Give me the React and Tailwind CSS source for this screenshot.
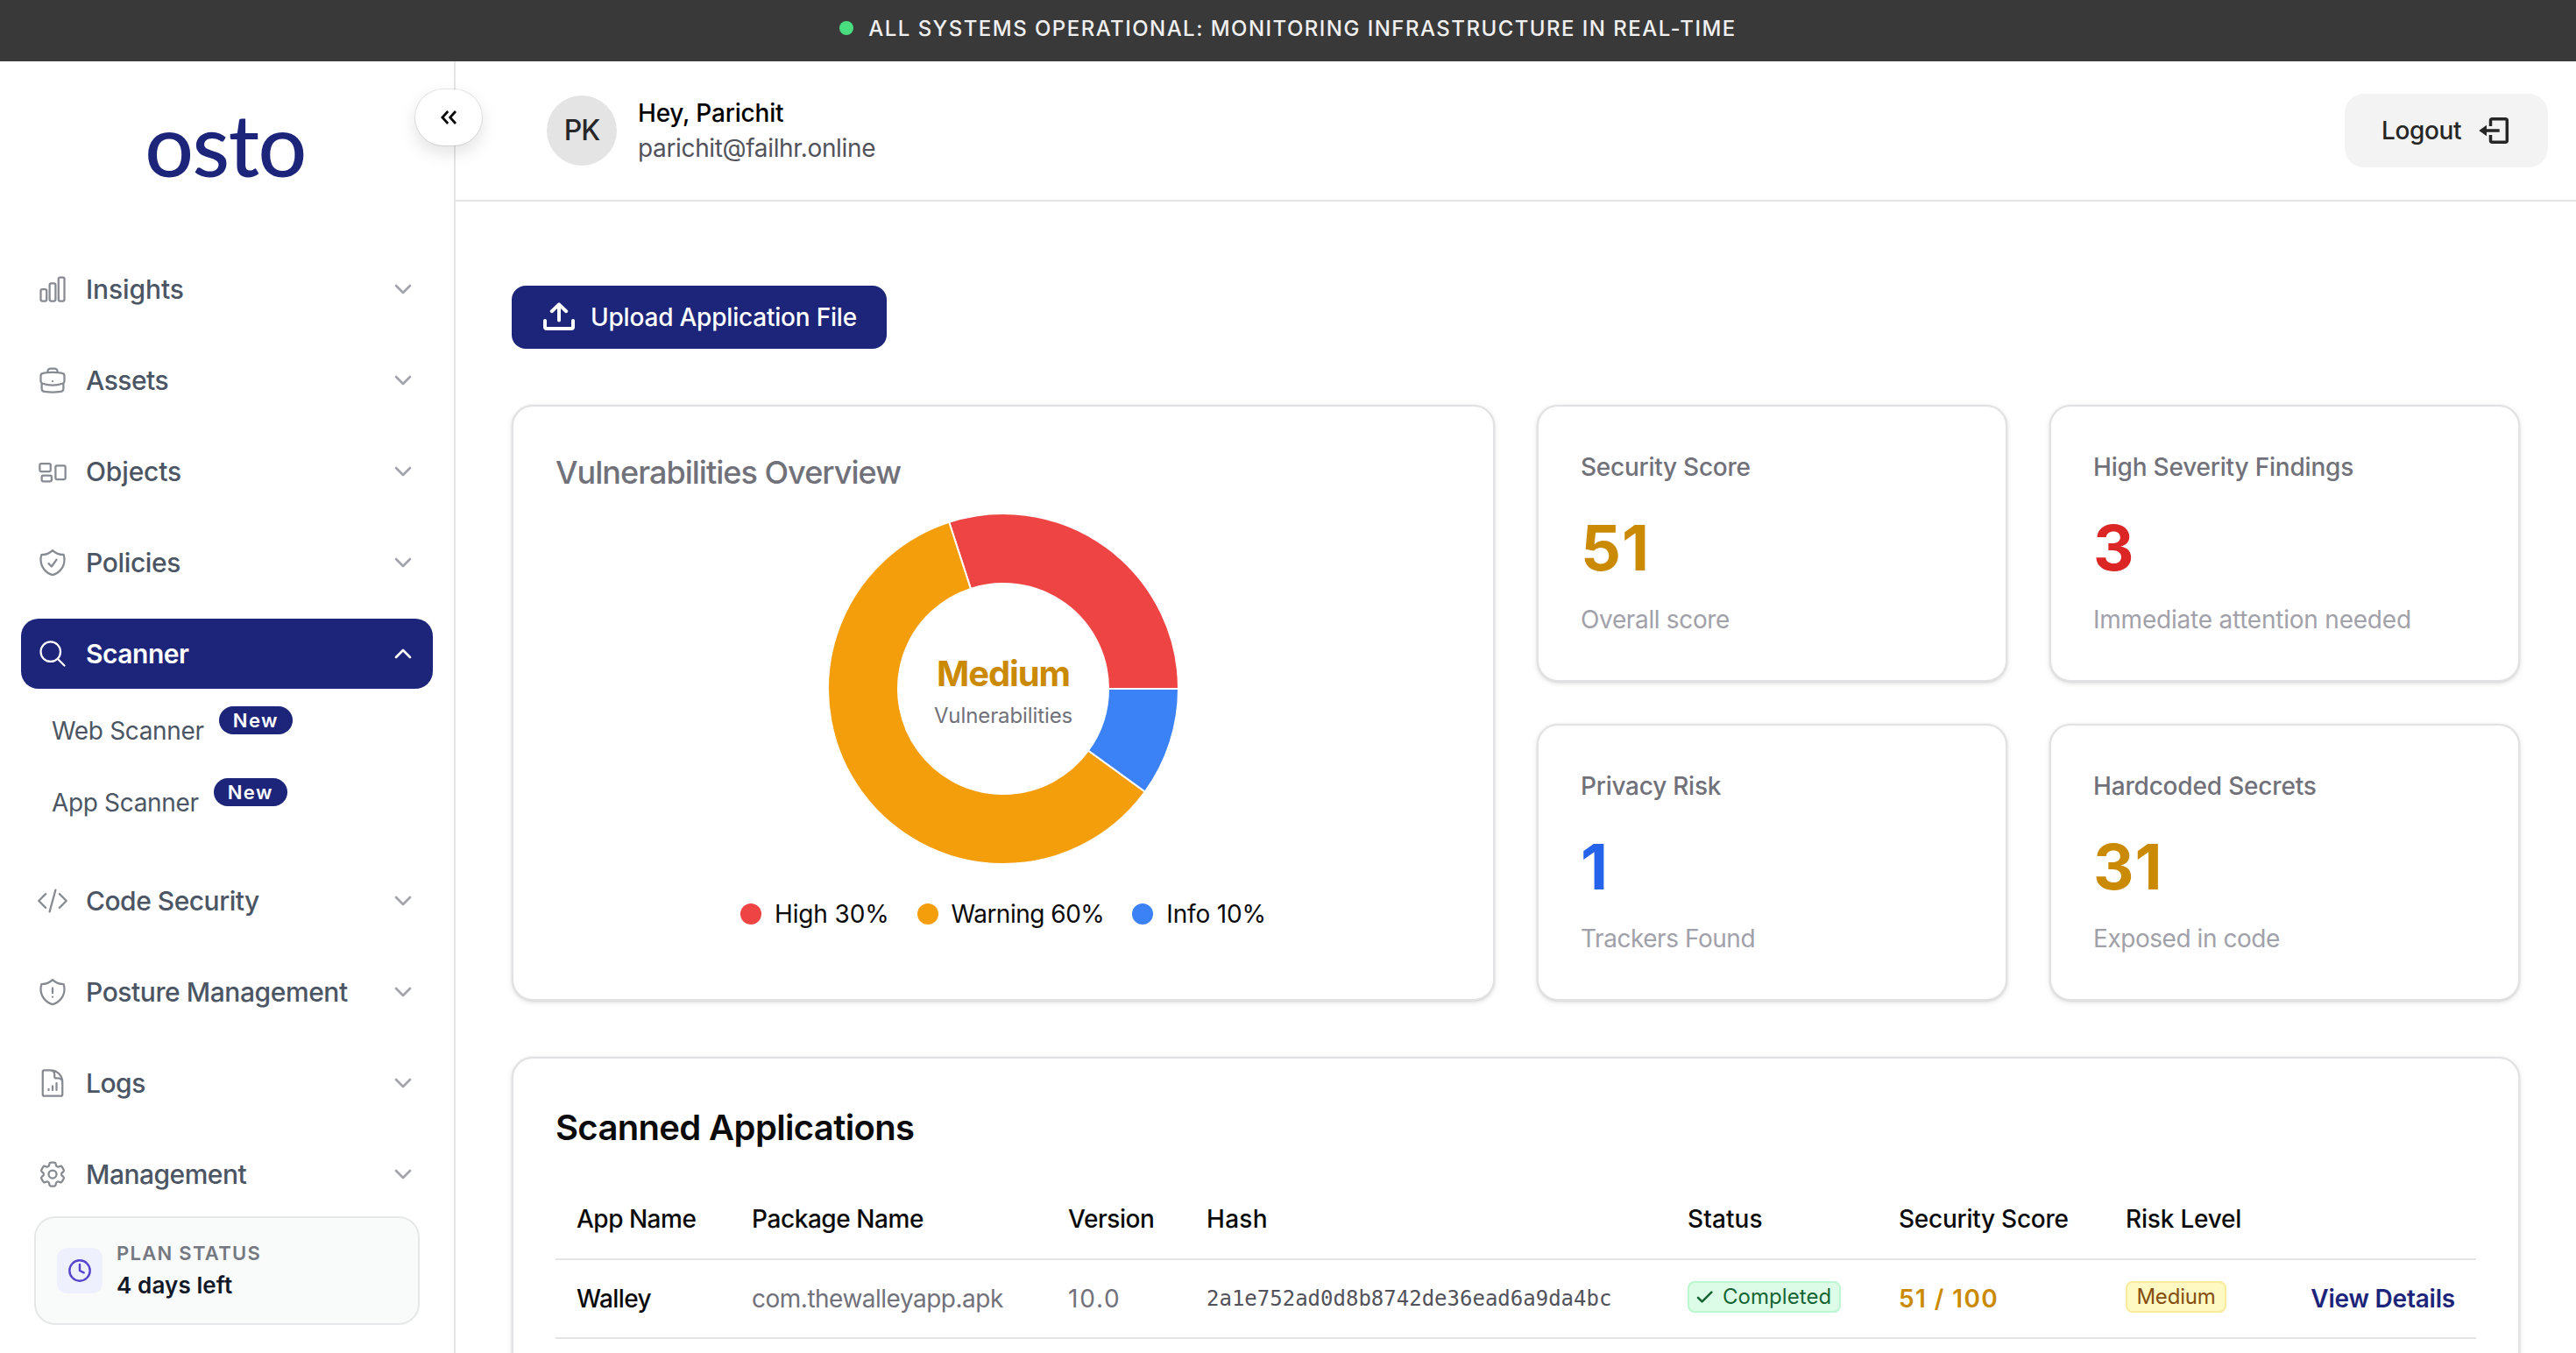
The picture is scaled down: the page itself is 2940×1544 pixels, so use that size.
import React from "react";
import {
  HiOutlineChartBar,
  HiOutlineBriefcase,
  HiOutlineRectangleGroup,
  HiOutlineShieldCheck,
  HiOutlineMagnifyingGlass,
  HiOutlineCodeBracket,
  HiOutlineShieldExclamation,
  HiOutlineDocumentChartBar,
  HiOutlineCog6Tooth,
} from "react-icons/hi2";
import { ChevronDown, ChevronUp, Clock } from "lucide-react";

const NAV_TOP = [
  { label: "Insights", Icon: HiOutlineChartBar, spacing: "tracking-[-0.1px]" },
  { label: "Assets", Icon: HiOutlineBriefcase, spacing: "tracking-[-0.5px]" },
  { label: "Objects", Icon: HiOutlineRectangleGroup, spacing: "tracking-[-0.15px]" },
  { label: "Policies", Icon: HiOutlineShieldCheck, spacing: "tracking-[-0.35px]" },
];

const NAV_BOTTOM = [
  { label: "Code Security", Icon: HiOutlineCodeBracket, spacing: "tracking-[-0.5px]" },
  { label: "Posture Management", Icon: HiOutlineShieldExclamation, spacing: "tracking-[-0.43px]" },
  { label: "Logs", Icon: HiOutlineDocumentChartBar, spacing: "tracking-[-0.5px]" },
  { label: "Management", Icon: HiOutlineCog6Tooth, spacing: "tracking-[-0.5px]" },
];

const STATS = [
  { title: "Security Score", value: "51", note: "Overall score", color: "text-[#ca8a04]", spacing: "tracking-[-0.26px]", noteSpacing: "tracking-[-0.35px]" },
  { title: "High Severity Findings", value: "3", note: "Immediate attention needed", color: "text-[#dc2626]", spacing: "tracking-[-0.2px]", noteSpacing: "tracking-[-0.22px]" },
  { title: "Privacy Risk", value: "1", note: "Trackers Found", color: "text-[#2563eb]", spacing: "tracking-[-0.25px]", noteSpacing: "tracking-[-0.45px]" },
  { title: "Hardcoded Secrets", value: "31", note: "Exposed in code", color: "text-[#ca8a04]", spacing: "tracking-[-0.18px]", noteSpacing: "tracking-[-0.45px]" },
];

const CARD = "rounded-3xl border-2 border-[#e2e2e4] bg-white shadow-[0_0_2px_rgba(0,0,0,0.08),0_2px_6px_rgba(0,0,0,0.1),0_2px_4px_-2px_rgba(0,0,0,0.1)]";

function NavItem({ label, Icon, spacing }) {
  return (
    <a className="flex h-20 items-center rounded-[20px] pr-[18px] pl-[18px]">
      <Icon className="size-9 shrink-0 text-[#868a91]" />
      <span className={`ml-5 flex-1 text-[30px] font-medium whitespace-nowrap text-[#4b5563] ${spacing}`}>{label}</span>
      <ChevronDown className="size-8 shrink-0 text-[#a1a5ab]" strokeWidth={2} />
    </a>
  );
}

function SubItem({ label }) {
  return (
    <a className="flex h-[82px] items-start gap-[17px] pt-5 pl-[35px]">
      <span className="mt-2 text-[28px] leading-10 tracking-[-0.34px] text-[#4b5563]">{label}</span>
      <span className="flex h-8 items-center rounded-full bg-[#1c2579] px-4 text-[22px] font-semibold tracking-[1.5px] text-white">New</span>
    </a>
  );
}

function Sidebar() {
  return (
    <aside className="relative flex w-[520px] shrink-0 flex-col border-r-2 border-[#e5e5e6] bg-white">
      <div className="flex h-[220px] justify-center pt-[34px] pr-1">
        <span className="h-[120px] text-[98px] leading-[120px] font-medium tracking-[-1.4px] text-[#1c2579] [font-family:Lato,sans-serif]">osto</span>
      </div>
      <nav className="flex flex-col px-6">
        <div className="flex flex-col gap-6">
          {NAV_TOP.map((item) => (
            <NavItem key={item.label} {...item} />
          ))}
          <a className="flex h-20 items-center rounded-[20px] bg-[#1c2579] pr-[18px] pl-[18px] text-white">
            <HiOutlineMagnifyingGlass className="size-9 shrink-0" />
            <span className="ml-5 flex-1 text-[30px] font-semibold tracking-[-0.49px]">Scanner</span>
            <ChevronUp className="size-8 shrink-0" strokeWidth={2} />
          </a>
        </div>
        <div className="mb-[38px] flex flex-col">
          <SubItem label="Web Scanner" />
          <SubItem label="App Scanner" />
        </div>
        <div className="flex flex-col gap-6">
          {NAV_BOTTOM.map((item) => (
            <NavItem key={item.label} {...item} />
          ))}
        </div>
      </nav>
      <div className="mx-[39px] mt-2 flex h-[124px] items-center rounded-3xl border-2 border-[#e6e7e8] bg-[#f9fafa] px-6">
        <div className="flex size-[52px] items-center justify-center rounded-xl bg-[#eef0fe]">
          <Clock className="size-7 text-[#5445cc]" strokeWidth={2.1} />
        </div>
        <div className="ml-4 flex flex-col">
          <span className="text-[22px] leading-8 font-semibold tracking-[1.29px] text-[#737881]">PLAN STATUS</span>
          <span className="mt-px text-[26px] leading-10 font-semibold tracking-[0.1px] text-[#111827]">4 days left</span>
        </div>
      </div>
      <button className="absolute top-8 -right-8 flex h-16 w-[76px] items-center justify-center rounded-full bg-white shadow-[0_0_0_1px_rgba(0,0,0,0.09),0_8px_20px_rgba(0,0,0,0.12)]">
        <svg className="h-4 w-[18px] overflow-visible" viewBox="0 0 18 16" fill="none" stroke="#0a0a0a" strokeWidth="2.8">
          <path d="M8.2 1 1.9 8l6.3 7M17 1l-6.3 7L17 15" />
        </svg>
      </button>
    </aside>
  );
}

function Header() {
  return (
    <header className="flex h-40 shrink-0 items-center border-b-2 border-[#e4e4e5] pr-8 pl-[104px]">
      <div className="flex size-20 items-center justify-center rounded-full bg-[#e4e4e5] text-[32px] font-medium tracking-[-1px] text-[#27272a]">PK</div>
      <div className="ml-6 flex flex-1 flex-col text-[28px] leading-10">
        <span className="font-medium tracking-[-0.2px] text-black">Hey, Parichit</span>
        <span className="tracking-[-0.35px] text-[#52525b]">parichit@failhr.online</span>
      </div>
      <button className="flex h-[84px] w-[232px] items-center rounded-[22px] bg-[#f3f3f3] pl-[42px] text-[#262626]">
        <span className="w-[110px] text-left text-[28px] font-medium tracking-[-0.37px]">Logout</span>
        <svg className="size-9" viewBox="0 0 36 36" fill="none">
          <path d="M14.5 13V6.7a2 2 0 0 1 2-2h14.8a2 2 0 0 1 2 2v22.6a2 2 0 0 1-2 2H16.5a2 2 0 0 1-2-2V23M9 18h15.7" stroke="currentColor" strokeWidth="3.5" />
          <path d="M1.3 18 10 11.7v12.6z" fill="currentColor" />
        </svg>
      </button>
    </header>
  );
}

const SLICES = [
  { from: 0, to: 108, color: "#ef4444" },
  { from: 108, to: 324, color: "#f59e0b" },
  { from: 324, to: 360, color: "#3b82f6" },
];

function point(radius, degrees) {
  const a = (degrees * Math.PI) / 180;
  return `${(200 + radius * Math.cos(a)).toFixed(2)} ${(200 - radius * Math.sin(a)).toFixed(2)}`;
}

function slicePath({ from, to }) {
  const large = to - from > 180 ? 1 : 0;
  return `M${point(200, from)}A200 200 0 ${large} 0 ${point(200, to)}L${point(120, to)}A120 120 0 ${large} 1 ${point(120, from)}Z`;
}

const LEGEND = [
  { label: "High 30%", dot: "bg-[#ef4444]", spacing: "tracking-[-0.15px]" },
  { label: "Warning 60%", dot: "bg-[#f59e0b]", spacing: "tracking-[-0.5px]" },
  { label: "Info 10%", dot: "bg-[#3b82f6]", spacing: "tracking-[-0.15px]" },
];

function Overview() {
  return (
    <section className={`col-span-2 row-span-2 flex flex-col px-12 pt-[47px] ${CARD}`}>
      <h2 className="text-[36px] leading-[56px] font-medium tracking-[-0.98px] text-[#71717a]">Vulnerabilities Overview</h2>
      <div className="relative mx-auto mt-[19px] size-[400px]">
        <svg className="size-full" viewBox="0 0 400 400">
          {SLICES.map((s) => (
            <path key={s.color} d={slicePath(s)} fill={s.color} stroke="#fff" strokeWidth="2" />
          ))}
        </svg>
        <div className="absolute inset-0 flex flex-col items-center justify-center pt-0.5">
          <span className="text-[40px] leading-[56px] font-bold tracking-[-1.1px] text-[#ca8a04]">Medium</span>
          <span className="mt-1 text-[24px] leading-8 tracking-[-0.1px] text-[#71717a]">Vulnerabilities</span>
        </div>
      </div>
      <div className="mt-[37px] flex justify-center gap-8">
        {LEGEND.map((l) => (
          <div key={l.label} className="flex items-center gap-[15px]">
            <span className={`size-6 rounded-full ${l.dot}`} />
            <span className={`text-[28px] leading-10 text-[#0a0a0a] ${l.spacing}`}>{l.label}</span>
          </div>
        ))}
      </div>
    </section>
  );
}

function StatCard({ title, value, note, color, spacing, noteSpacing }) {
  return (
    <section className={`flex flex-col px-12 pt-[49px] ${CARD}`}>
      <span className={`text-[28px] leading-10 font-medium text-[#71717a] ${spacing}`}>{title}</span>
      <span className={`mt-8 text-[72px] leading-[80px] font-bold tracking-[1px] ${color}`}>{value}</span>
      <span className={`mt-[22px] text-[28px] leading-10 text-[#a1a1aa] ${noteSpacing}`}>{note}</span>
    </section>
  );
}

function ScannedApplications() {
  return (
    <section className={`mt-16 h-[500px] shrink-0 px-12 pt-[51px] ${CARD}`}>
      <h2 className="mb-[31px] text-[40px] leading-[56px] font-semibold tracking-[-0.65px] text-[#0a0a0a]">Scanned Applications</h2>
      <table className="w-full table-fixed border-collapse text-left text-[28px] whitespace-nowrap">
        <colgroup>
          <col className="w-[200px]" />
          <col className="w-[361px]" />
          <col className="w-[158px]" />
          <col className="w-[549px]" />
          <col className="w-[241px]" />
          <col className="w-[259px]" />
          <col className="w-[210px]" />
          <col className="w-[214px]" />
        </colgroup>
        <thead>
          <tr className="h-[91px] border-b-2 border-[#e4e4e5] text-[#0a0a0a] [&>th]:px-6 [&>th]:font-medium">
            <th className="tracking-[-0.5px]">App Name</th>
            <th className="tracking-[-0.42px]">Package Name</th>
            <th className="tracking-[-0.44px]">Version</th>
            <th className="tracking-[0.3px]">Hash</th>
            <th className="tracking-[0.09px]">Status</th>
            <th className="tracking-[-0.26px]">Security Score</th>
            <th className="tracking-[-0.2px]">Risk Level</th>
            <th />
          </tr>
        </thead>
        <tbody>
          <tr className="h-[90px] border-b-2 border-[#e4e4e5] [&>td]:px-6">
            <td className="font-medium tracking-[-0.6px] text-[#0a0a0a]">Walley</td>
            <td className="tracking-[-0.5px] text-[#71717a]">com.thewalleyapp.apk</td>
            <td className="tracking-[1.8px] text-[#71717a]">10.0</td>
            <td className="text-[24px] text-[#52525b] [font-family:'DejaVu_Sans_Mono',monospace]">2a1e752ad0d8b8742de36ead6a9da4bc</td>
            <td>
              <span className="mb-1 flex h-9 w-[175px] items-center rounded-lg border-2 border-[#bbf7d0] bg-[#dcfce7] pl-2 text-[24px] text-[#166534]">
                <svg className="h-4 w-5" viewBox="0 0 20 16" fill="none" stroke="currentColor" strokeWidth="2.6" strokeLinecap="round" strokeLinejoin="round">
                  <path d="M2 8.8 6.6 13.4 17.4 2.6" />
                </svg>
                <span className="ml-2.5 tracking-[0.05px]">Completed</span>
              </span>
            </td>
            <td className="font-semibold tracking-[1.4px] text-[#ca8a04]">51 / 100</td>
            <td>
              <span className="mb-1 flex h-9 w-[115px] items-center justify-center rounded-lg border-2 border-[#f8eb9c] bg-[#fef9c3] text-[24px] tracking-[-0.2px] text-[#854d0e]">Medium</span>
            </td>
            <td className="text-right font-semibold tracking-[-0.22px] text-[#1c2579]">View Details</td>
          </tr>
        </tbody>
      </table>
    </section>
  );
}

export default function App() {
  return (
    <div className="flex h-[1544px] w-[2940px] flex-col overflow-hidden bg-white [font-family:Inter,sans-serif]">
      <div className="flex h-[70px] shrink-0 items-center justify-center gap-[17px] bg-[#393939] pb-[5px]">
        <span className="mb-px size-4 rounded-full bg-[#4ade80]" />
        <span className="text-[24px] font-medium tracking-[1.46px] text-[#f0f0f0]">ALL SYSTEMS OPERATIONAL: MONITORING INFRASTRUCTURE IN REAL-TIME</span>
      </div>
      <div className="flex min-h-0 flex-1">
        <Sidebar />
        <div className="flex min-w-0 flex-1 flex-col overflow-hidden">
          <Header />
          <main className="flex min-h-0 flex-1 flex-col overflow-hidden px-16 pt-24">
            <button className="flex h-[72px] w-[428px] shrink-0 items-center rounded-2xl bg-[#1c2579] pl-9 text-white">
              <svg className="mb-0.5 h-8 w-9" viewBox="0 0 36 32" fill="none" stroke="currentColor" strokeWidth="4" strokeLinecap="round" strokeLinejoin="round">
                <path d="M18 3v17.5M9.8 10.2 18 2.4l8.2 7.8M2 21v7a2 2 0 0 0 2 2h28a2 2 0 0 0 2-2v-7" />
              </svg>
              <span className="ml-[18px] text-[28px] font-medium tracking-[-0.21px] whitespace-nowrap">Upload Application File</span>
            </button>
            <div className="mt-16 grid h-[680px] shrink-0 grid-cols-4 grid-rows-2 gap-12">
              <Overview />
              {STATS.map((s) => (
                <StatCard key={s.title} {...s} />
              ))}
            </div>
            <ScannedApplications />
          </main>
        </div>
      </div>
    </div>
  );
}
